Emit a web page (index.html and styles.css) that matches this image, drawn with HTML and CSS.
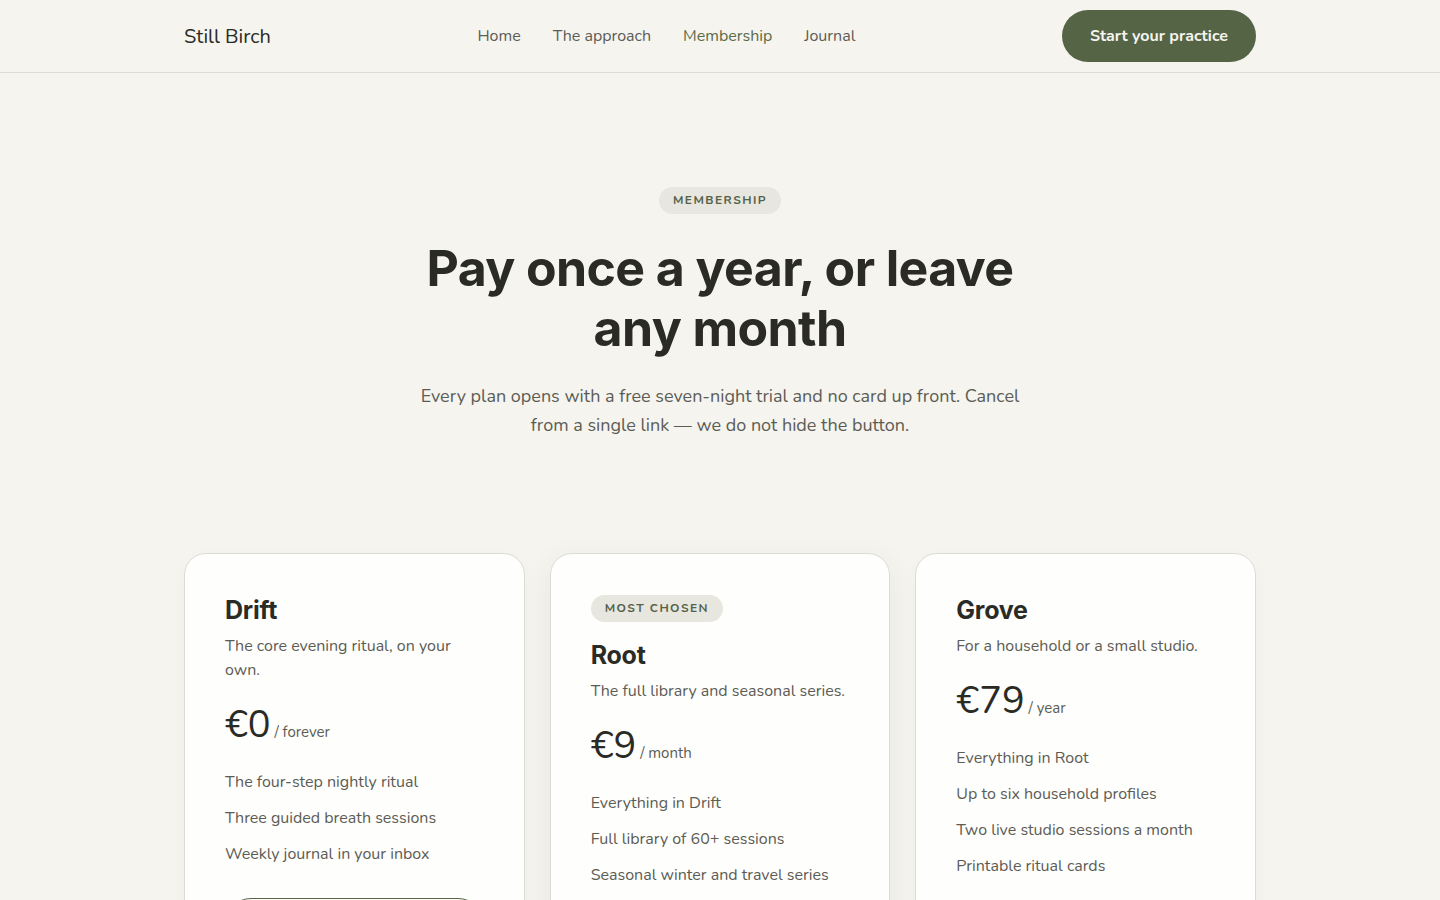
FILE: index.html
```html
<!DOCTYPE html>
<html lang="en">
<head>
    <meta charset="UTF-8">
    <meta name="viewport" content="width=device-width, initial-scale=1.0">
    <title>Still Birch - Membership</title>
    <link rel="stylesheet" href="styles.css">
</head>
<body>
    <header class="site-header">
        <div class="wrap header-inner">
            <a href="#" class="brand">Still Birch</a>
            <nav class="main-nav">
                <a href="#">Home</a>
                <a href="#">The approach</a>
                <a href="#" class="active">Membership</a>
                <a href="#">Journal</a>
            </nav>
            <a href="#" class="btn-primary">Start your practice</a>
        </div>
    </header>

    <main>
        <section class="intro">
            <span class="pill">Membership</span>
            <h1>Pay once a year, or leave any month</h1>
            <p>Every plan opens with a free seven-night trial and no card up front. Cancel from a single link — we do not hide the button.</p>
        </section>

        <section class="wrap plans">
            <!-- Free plan -->
            <article class="plan">
                <h2>Drift</h2>
                <p class="plan-desc">The core evening ritual, on your own.</p>
                <div class="price"><span class="amount">€0</span> / forever</div>
                <ul class="features">
                    <li>The four-step nightly ritual</li>
                    <li>Three guided breath sessions</li>
                    <li>Weekly journal in your inbox</li>
                </ul>
                <a href="#" class="btn-outline">Begin for free</a>
            </article>
            <!-- Monthly plan -->
            <article class="plan featured">
                <span class="pill">Most chosen</span>
                <h2>Root</h2>
                <p class="plan-desc">The full library and seasonal series.</p>
                <div class="price"><span class="amount">€9</span> / month</div>
                <ul class="features">
                    <li>Everything in Drift</li>
                    <li>Full library of 60+ sessions</li>
                    <li>Seasonal winter and travel series</li>
                    <li>Offline listening</li>
                </ul>
                <a href="#" class="btn-primary">Start seven free nights</a>
            </article>
            <!-- Yearly plan -->
            <article class="plan">
                <h2>Grove</h2>
                <p class="plan-desc">For a household or a small studio.</p>
                <div class="price"><span class="amount">€79</span> / year</div>
                <ul class="features">
                    <li>Everything in Root</li>
                    <li>Up to six household profiles</li>
                    <li>Two live studio sessions a month</li>
                    <li>Printable ritual cards</li>
                </ul>
                <a href="#" class="btn-outline">Choose Grove</a>
            </article>
        </section>
    </main>
</body>
</html>
```

FILE: styles.css
```css
body {
    font-family: "Nunito", "Lato", "Open Sans", sans-serif;
    margin: 0; padding: 0;
    background-color: #f5f4ef;
    color: #2b2b26;
}
a { text-decoration: none; color: inherit; }

.wrap {
    max-width: 1072px;
    margin: 0 auto;
}

/* Top bar */
.site-header {
    border-bottom: 1px solid #dddcd4;
}
.header-inner {
    height: 72px;
    display: flex;
    align-items: center;
    justify-content: space-between;
}
.brand {
    font-size: 20px;
    color: #2b2b26;
}
.main-nav {
    display: flex;
    gap: 32px;
    font-size: 16px;
}
.main-nav a { color: #5c5c55; }
.main-nav a.active { color: #5a6b48; }

.btn-primary {
    display: inline-flex;
    align-items: center;
    justify-content: center;
    height: 52px;
    padding: 0 28px;
    border-radius: 26px;
    background: #566446;
    color: #f5f4ef;
    font-weight: 700;
    font-size: 16px;
    box-sizing: border-box;
}
.btn-outline {
    display: flex;
    align-items: center;
    justify-content: center;
    height: 52px;
    border-radius: 26px;
    border: 1.5px solid #566446;
    color: #566446;
    font-weight: 700;
    font-size: 16px;
    box-sizing: border-box;
}

/* Heading block */
.pill {
    display: inline-block;
    padding: 6px 14px;
    border-radius: 14px;
    background: #e7e6df;
    color: #55624a;
    font-size: 12px;
    font-weight: 700;
    letter-spacing: 0.12em;
    text-transform: uppercase;
    line-height: 15px;
}
.intro {
    text-align: center;
    padding: 114px 0 0;
}
.intro h1 {
    font-family: "Inter", "Open Sans", sans-serif;
    font-size: 50px;
    font-weight: 700;
    letter-spacing: -0.012em;
    line-height: 60px;
    margin: 24px auto 0;
    max-width: 620px;
    color: #2b2b26;
}
.intro p {
    font-size: 18px;
    line-height: 29px;
    color: #5c5c55;
    max-width: 610px;
    margin: 24px auto 0;
}

/* Plans */
.plans {
    display: grid;
    grid-template-columns: repeat(3, 1fr);
    gap: 25px;
    margin-top: 113px;
    padding-bottom: 80px;
    align-items: start;
}
.plan {
    background: #fefefc;
    border: 1px solid #dddcd4;
    border-radius: 22px;
    padding: 40px;
    display: flex;
    flex-direction: column;
    align-items: flex-start;
    box-shadow: 0 4px 14px rgba(60, 60, 40, 0.03);
}
.plan.featured {
    box-shadow: 0 10px 30px rgba(60, 60, 40, 0.08);
}
.plan .pill { margin-top: 1px; margin-bottom: 17px; }
.plan h2 {
    font-family: "Inter", "Open Sans", sans-serif;
    font-size: 25px;
    font-weight: 700;
    letter-spacing: -0.01em;
    line-height: 32px;
    margin: 0;
}
.plan-desc {
    font-size: 16px;
    line-height: 24px;
    color: #5c5c55;
    margin: 8px 0 0;
}
.price {
    margin-top: 20px;
    font-size: 15px;
    color: #5c5c55;
}
.price .amount {
    font-size: 38px;
    color: #2b2b26;
    line-height: 46px;
}
.features {
    list-style: none;
    padding: 0;
    margin: 16px 0 26px;
    font-size: 16px;
    color: #5c5c55;
}
.features li {
    line-height: 24px;
    padding: 6px 0;
}
.plan .btn-outline, .plan .btn-primary { align-self: stretch; }
```
